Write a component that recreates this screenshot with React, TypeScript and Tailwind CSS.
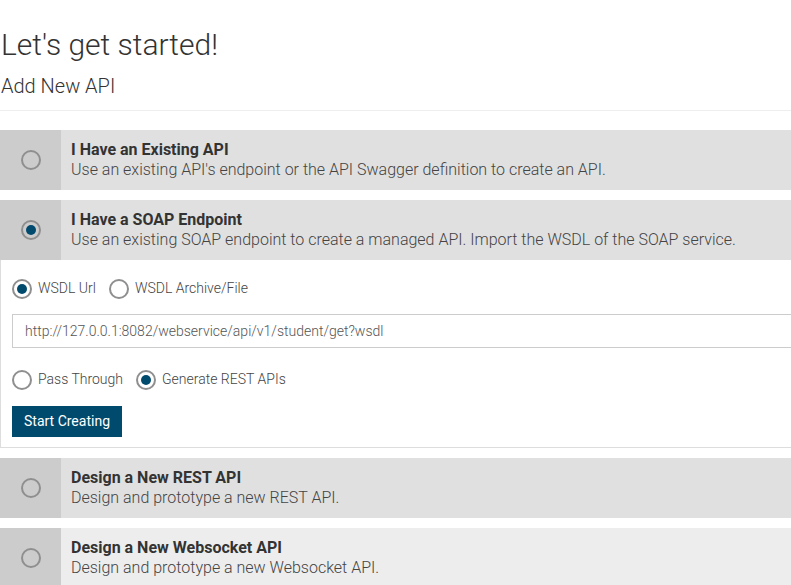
import { useState } from 'react'

const options = [
    {
        id: 'existing',
        title: 'I Have an Existing API',
        desc: "Use an existing API's endpoint or the API Swagger definition to create an API.",
    },
    {
        id: 'soap',
        title: 'I Have a SOAP Endpoint',
        desc: 'Use an existing SOAP endpoint to create a managed API. Import the WSDL of the SOAP service.',
    },
    {
        id: 'rest',
        title: 'Design a New REST API',
        desc: 'Design and prototype a new REST API.',
    },
    {
        id: 'ws',
        title: 'Design a New Websocket API',
        desc: 'Design and prototype a new Websocket API.',
    },
]

function Radio({ checked }: { checked: boolean }) {
    return (
        <span className="flex h-[20px] w-[20px] shrink-0 items-center justify-center rounded-full border-2 border-[#8f8f8f]">
            {checked && (
                <span className="h-[10px] w-[10px] rounded-full bg-[#004a6e]" />
            )}
        </span>
    )
}

export default function App() {
    const [selected] = useState<string>('soap')

    return (
        <div
            className="h-[585px] w-full overflow-hidden bg-white"
            style={{ fontFamily: 'Roboto, "Liberation Sans", sans-serif' }}
        >
            <div className="w-[900px]">
                <h1 className="mt-[25px] pl-[1px] text-[30px] font-light leading-[40px] text-[#333]">
                    Let's get started!
                </h1>
                <h2 className="mt-[7px] pl-[1px] text-[20px] font-light leading-[28px] text-[#333]">
                    Add New API
                </h2>
                <div className="mt-[10px] border-b border-[#eee]" />

                <div className="mt-[19px] flex flex-col gap-[10px]">
                    {options.map((o, i) => (
                        <div key={o.id}>
                            <div
                                className={`flex h-[60px] ${
                                    i === 3 ? 'bg-[#ededed]' : 'bg-[#e0e0e0]'
                                }`}
                            >
                                <div className="flex w-[61px] items-center justify-center bg-[#cccccc]">
                                    <Radio checked={selected === o.id} />
                                </div>
                                <div className="flex flex-col justify-center pl-[10px]">
                                    <div className="text-[16px] font-bold leading-[20px] text-[#333]">
                                        {o.title}
                                    </div>
                                    <div className="text-[16px] font-light leading-[20px] text-[#444]">
                                        {o.desc}
                                    </div>
                                </div>
                            </div>
                            {o.id === 'soap' && (
                                <div className="border border-t-0 border-[#ddd] px-[11px] pb-[10px] pt-[18px]">
                                    <div className="flex items-center gap-[13px] text-[14px] font-light text-[#444]">
                                        <label className="flex items-center gap-[6px]">
                                            <Radio checked={true} />
                                            WSDL Url
                                        </label>
                                        <label className="flex items-center gap-[6px]">
                                            <Radio checked={false} />
                                            WSDL Archive/File
                                        </label>
                                    </div>
                                    <input
                                        className="mt-[15px] block h-[34px] w-full border border-[#ccc] px-[12px] text-[14px] font-light text-[#555] outline-none"
                                        defaultValue="http://127.0.0.1:8082/webservice/api/v1/student/get?wsdl"
                                    />
                                    <div className="mt-[21px] flex items-center gap-[13px] text-[14px] font-light text-[#444]">
                                        <label className="flex items-center gap-[6px]">
                                            <Radio checked={false} />
                                            Pass Through
                                        </label>
                                        <label className="flex items-center gap-[6px]">
                                            <Radio checked={true} />
                                            Generate REST APIs
                                        </label>
                                    </div>
                                    <button className="mt-[16px] h-[31px] bg-[#004a6e] px-[12px] text-[14px] text-white">
                                        Start Creating
                                    </button>
                                </div>
                            )}
                        </div>
                    ))}
                </div>
            </div>
        </div>
    )
}
